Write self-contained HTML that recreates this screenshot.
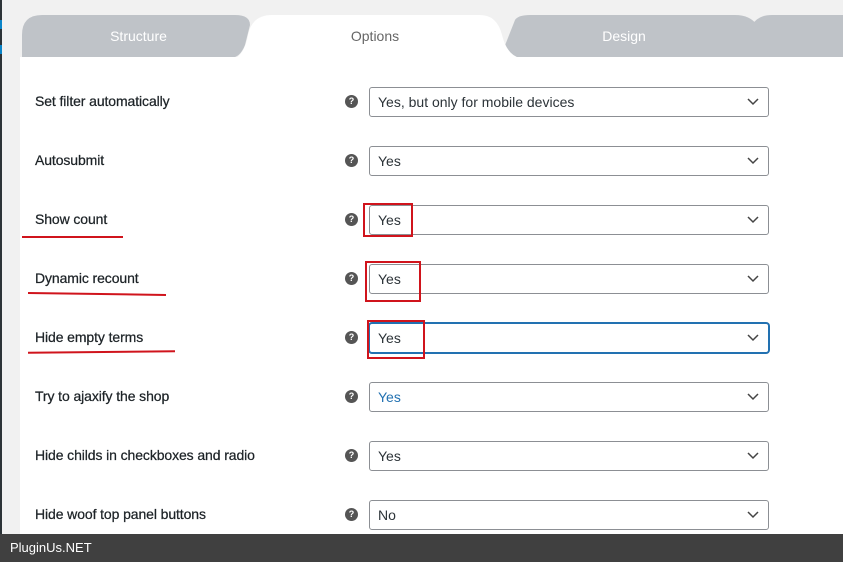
<!DOCTYPE html>
<html><head><meta charset="utf-8"><style>
*{margin:0;padding:0;box-sizing:border-box}
body{width:843px;height:562px;overflow:hidden;background:#f1f1f1;font-family:"Liberation Sans",sans-serif;position:relative}
.abs{position:absolute}
.content{left:20px;top:57px;width:823px;height:477px;background:#fff}
.lbl{left:35px;font-size:14px;color:#1d2327;letter-spacing:-0.1px;-webkit-text-stroke:0.25px #1d2327}
.help{left:345px;width:13px;height:13px;border-radius:50%;background:#555;color:#fff;font-size:9px;font-weight:bold;text-align:center;line-height:13px}
.sel{left:369px;width:400px;height:30px;border:1px solid #8c8f94;border-radius:3px;background:#fff;font-size:14px;color:#2c3338;padding-left:8px;line-height:28px}
.sel svg{position:absolute;right:9px;top:10px}
.red{border:2px solid #d0141c}
.ul{height:2px;background:#d0141c}
.tab{font-size:14px;color:#fff;text-align:center}
</style></head><body>
<div class="abs" style="left:0;top:0;width:2px;height:534px;background:#2c3338"></div>
<div class="abs" style="left:0;top:20px;width:2px;height:9px;background:#0a84c8"></div>
<div class="abs" style="left:0;top:45px;width:2px;height:9px;background:#0a84c8"></div>
<svg class="abs" style="left:0;top:0" width="843" height="58">
<path d="M740,58 L752,25 Q758,15 772,15 L843,15 L843,58 Z" fill="#bfc3c8"/>
<path d="M500,58 L515,20 Q518,15 530,15 L735,15 Q750,15 757,25 L770,58 Z" fill="#bfc3c8"/>
<path d="M22,58 L22,35 Q22,15 42,15 L235,15 Q250,15 250,25 L245,45 Q240,58 230,58 Z" fill="#bfc3c8"/>
<path d="M236,58 Q245,52 248,35 Q252,15 272,15 L480,15 Q497,15 502,35 Q507,55 520,58 Z" fill="#fff"/>
</svg>
<div class="abs tab" style="left:22px;top:28px;width:233px">Structure</div>
<div class="abs tab" style="left:250px;top:28px;width:250px;color:#666">Options</div>
<div class="abs tab" style="left:500px;top:28px;width:248px">Design</div>
<div class="abs content"></div>

<div class="abs lbl" style="top:93px">Set filter automatically</div>
<div class="abs lbl" style="top:152px">Autosubmit</div>
<div class="abs lbl" style="top:211px">Show count</div>
<div class="abs lbl" style="top:270px">Dynamic recount</div>
<div class="abs lbl" style="top:329px">Hide empty terms</div>
<div class="abs lbl" style="top:388px">Try to ajaxify the shop</div>
<div class="abs lbl" style="top:447px">Hide childs in checkboxes and radio</div>
<div class="abs lbl" style="top:506px">Hide woof top panel buttons</div>

<div class="abs help" style="top:95px">?</div>
<div class="abs help" style="top:154px">?</div>
<div class="abs help" style="top:213px">?</div>
<div class="abs help" style="top:272px">?</div>
<div class="abs help" style="top:331px">?</div>
<div class="abs help" style="top:390px">?</div>
<div class="abs help" style="top:449px">?</div>
<div class="abs help" style="top:508px">?</div>

<div class="abs sel" style="top:87px">Yes, but only for mobile devices<svg width="12" height="8"><path d="M1,1 L6,6 L11,1" stroke="#444" stroke-width="1.5" fill="none"/></svg></div>
<div class="abs sel" style="top:146px">Yes<svg width="12" height="8"><path d="M1,1 L6,6 L11,1" stroke="#444" stroke-width="1.5" fill="none"/></svg></div>
<div class="abs sel" style="top:205px">Yes<svg width="12" height="8"><path d="M1,1 L6,6 L11,1" stroke="#444" stroke-width="1.5" fill="none"/></svg></div>
<div class="abs sel" style="top:264px">Yes<svg width="12" height="8"><path d="M1,1 L6,6 L11,1" stroke="#444" stroke-width="1.5" fill="none"/></svg></div>
<div class="abs sel" style="top:323px;border-color:#2271b1;box-shadow:0 0 0 1px #2271b1">Yes<svg width="12" height="8"><path d="M1,1 L6,6 L11,1" stroke="#444" stroke-width="1.5" fill="none"/></svg></div>
<div class="abs sel" style="top:382px;color:#2271b1">Yes<svg width="12" height="8"><path d="M1,1 L6,6 L11,1" stroke="#444" stroke-width="1.5" fill="none"/></svg></div>
<div class="abs sel" style="top:441px">Yes<svg width="12" height="8"><path d="M1,1 L6,6 L11,1" stroke="#444" stroke-width="1.5" fill="none"/></svg></div>
<div class="abs sel" style="top:500px">No<svg width="12" height="8"><path d="M1,1 L6,6 L11,1" stroke="#444" stroke-width="1.5" fill="none"/></svg></div>

<div class="abs red" style="left:363px;top:203px;width:50px;height:34px"></div>
<div class="abs red" style="left:365px;top:261px;width:56px;height:41px"></div>
<div class="abs red" style="left:367px;top:320px;width:58px;height:39px"></div>
<div class="abs ul" style="left:22px;top:236px;width:101px"></div>
<div class="abs ul" style="left:28px;top:293px;width:138px;transform:rotate(0.8deg)"></div>
<div class="abs ul" style="left:28px;top:351px;width:147px;transform:rotate(-0.6deg)"></div>

<div class="abs" style="left:0;top:534px;width:843px;height:28px;background:#404040;color:#fff;font-size:13px;padding:6px 0 0 10px">PluginUs.NET</div>
</body></html>
